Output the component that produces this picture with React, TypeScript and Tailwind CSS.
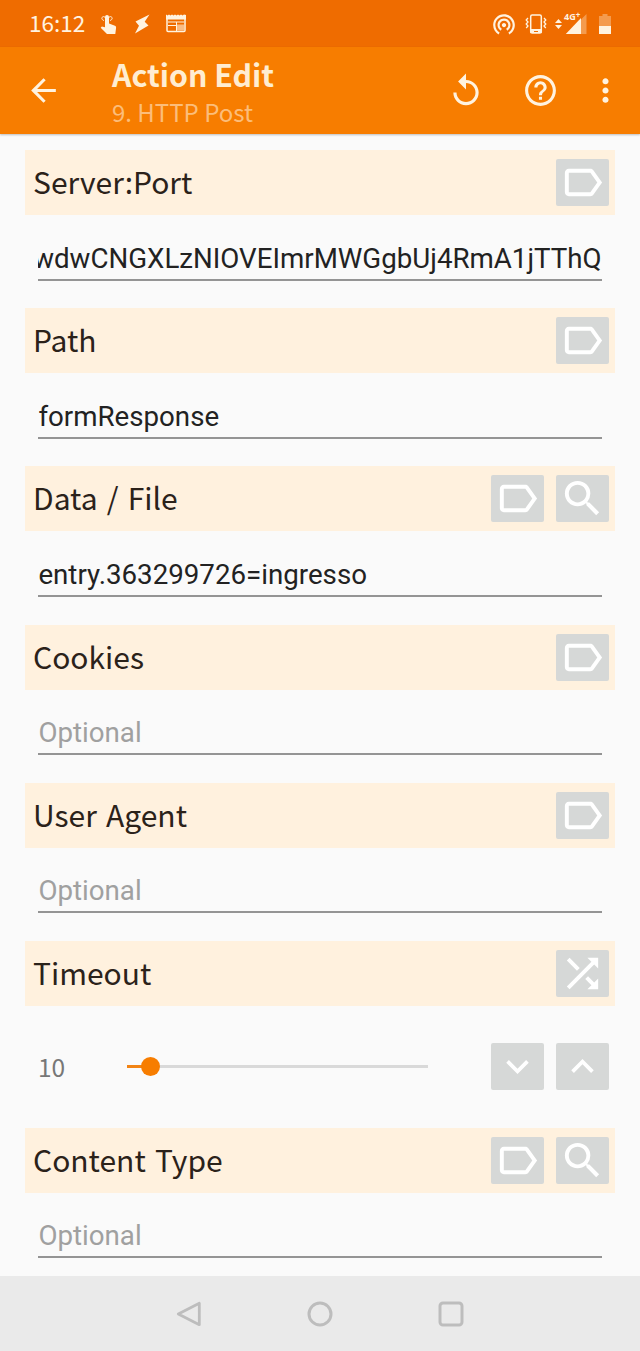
import type { ReactNode } from 'react'
import {
  MdArrowBack,
  MdHelpOutline,
  MdKeyboardArrowDown,
  MdKeyboardArrowUp,
  MdMoreVert,
  MdReplay,
  MdSearch,
  MdShuffle,
  MdWifiTethering,
} from 'react-icons/md'

type IconName = 'label' | 'search' | 'shuffle' | 'down' | 'up'

interface Field {
  title: string
  value?: string
  alignEnd?: boolean
  actions: IconName[]
}

const fields: Field[] = [
  { title: 'Server:Port', value: 'wdwCNGXLzNIOVEImrMWGgbUj4RmA1jTThQ', alignEnd: true, actions: ['label'] },
  { title: 'Path', value: 'formResponse', actions: ['label'] },
  { title: 'Data / File', value: 'entry.363299726=ingresso', actions: ['label', 'search'] },
  { title: 'Cookies', actions: ['label'] },
  { title: 'User Agent', actions: ['label'] },
]

const timeout = { value: 10, percent: 7.6 }

function LabelIcon() {
  return (
    <svg viewBox="0 0 24 24" className="size-[47px]" fill="currentColor">
      <path d="M17.63 5.84C17.27 5.33 16.67 5 16 5L5 5.01C3.9 5.01 3 5.9 3 7v10c0 1.1.9 1.99 2 1.99L16 19c.67 0 1.27-.33 1.63-.84L22 12l-4.37-6.16zM16 17H5V7h11l3.55 5L16 17z" />
    </svg>
  )
}

const icons: Record<IconName, ReactNode> = {
  label: <LabelIcon />,
  search: <MdSearch className="size-[47px]" />,
  shuffle: <MdShuffle className="size-[47px]" />,
  down: <MdKeyboardArrowDown className="size-[45px]" />,
  up: <MdKeyboardArrowUp className="size-[45px]" />,
}

function IconButton({ name }: { name: IconName }) {
  return (
    <button
      aria-label={name}
      className="flex h-[47px] w-[53px] shrink-0 items-center justify-center rounded-[2px] bg-[#d6d8d7] text-white"
    >
      {icons[name]}
    </button>
  )
}

function SectionHeader({ title, actions }: { title: string; actions: IconName[] }) {
  return (
    <div className="flex h-[65px] items-center justify-between bg-[#fff1de] pr-[6px] pl-2">
      <h2 className="pb-[3px] font-['Noto_Sans_CJK_SC',sans-serif] text-[30px] leading-none [word-spacing:2.5px] text-[#2b221a]">
        {title}
      </h2>
      <div className="flex gap-3">
        {actions.map((name) => (
          <IconButton key={name} name={name} />
        ))}
      </div>
    </div>
  )
}

function FieldSection({ title, value, alignEnd, actions }: Field) {
  return (
    <section className="h-[158.2px]">
      <SectionHeader title={title} actions={actions} />
      <div
        className={`mx-[13.4px] flex h-[65.5px] items-end overflow-hidden border-b-2 border-[#949494] pb-[4px] text-[27.7px] leading-[33px] whitespace-nowrap ${
          alignEnd ? 'justify-end' : ''
        } ${value ? 'text-[#222]' : 'text-[#a0a0a0]'}`}
      >
        <span>{value ?? 'Optional'}</span>
      </div>
    </section>
  )
}

function StatusBar() {
  return (
    <div className="flex h-[47px] shrink-0 items-center justify-between bg-[#ef6c00] pr-[29px] pl-[29px] text-[#fff3e0]">
      <div className="flex items-center">
        <span className="w-[71px] pb-[3px] font-['Noto_Sans_CJK_SC',sans-serif] text-[22.5px] leading-none">16:12</span>
        <svg viewBox="0 0 17 20" className="h-5 w-[17px]" fill="currentColor">
          <path d="M5 3a2 2 0 0 1 4 0v6.500l6 2.300q1.300.6 1.100 2L15.300 20H7L.7 13.800l1.200-1.300 3.100.8z" />
          <path d="M4 6.500C1.500 6 1 3 3.500 2.600L7 4l3.500-1.400C13 3 12.500 6 10 6.500" fill="none" stroke="currentColor" />
        </svg>
        <svg viewBox="0 0 16 20" className="ml-[17px] h-5 w-4" fill="currentColor">
          <path d="M15.500.5 1.500 7.500l3.500 4.200L1 19.500l13.500-8-3.800-3.800z" />
        </svg>
        <svg viewBox="0 0 20 19" className="ml-[16px] h-[19px] w-5" fill="none" stroke="currentColor">
          <path d="M1 3v13.500q0 1 1 1h16q1 0 1-1V3" strokeWidth="1.500" />
          <path d="M0 .5l1.500 1L3 .5l1.500 1L6 .5l1.500 1L9 .5l1.500 1 1.500-1 1.500 1 1.500-1 1.500 1 1.500-1L20 1v4.500H0z" fill="currentColor" stroke="none" />
          <path d="M2 8h16M2 11.500h8M10.500 8v9" />
          <path d="M11 10.500h7v6h-7z" fill="currentColor" stroke="none" opacity=".6" />
        </svg>
      </div>
      <div className="flex items-center">
        <MdWifiTethering className="size-[26px]" />
        <svg viewBox="0 0 22 20" className="ml-2 h-5 w-[22px]" fill="none" stroke="currentColor">
          <rect x="5.700" y="1" width="10.600" height="18" rx="1.500" strokeWidth="1.500" />
          <path d="M5.500 15.500h11v3h-11z" fill="currentColor" />
          <path d="M9 17.500h4" stroke="#ef6c00" />
          <path d="M3 4 1.200 6 3 8 1.200 10 3 12 1.200 14M19 4l1.800 2L19 8l1.800 2-1.800 2 1.800 2" strokeWidth="1.300" />
        </svg>
        <svg viewBox="0 0 7 10" className="ml-2 h-2.5 w-[7px]" fill="currentColor">
          <path d="M3.500 0 7 4H0zM3.500 10 0 6h7z" />
        </svg>
        <div className="relative ml-[3px] h-5 w-[22px]">
          <svg viewBox="0 0 22 20" className="h-5 w-[22px]" fill="currentColor">
            <path d="M16 4v16H.8z" />
            <path d="M16 5.500 21.500 0v20H16z" opacity=".35" />
          </svg>
          <span className="absolute top-[-2px] left-[-1px] font-['Open_Sans',sans-serif] text-[9px] leading-[10px] font-bold">
            4G
            <span className="relative top-[-2px] text-[8px]">+</span>
          </span>
        </div>
        <svg viewBox="0 0 12 20" className="ml-3 h-5 w-3" fill="currentColor">
          <path d="M3.500 0h5v2H12v10H0V2h3.500z" opacity=".35" />
          <path d="M0 12h12v8H0z" />
        </svg>
      </div>
    </div>
  )
}

function NavBar() {
  return (
    <nav className="flex h-[75px] shrink-0 items-center justify-center gap-[103px] bg-[#eaeaea] text-[#bdbdbd]">
      <svg viewBox="0 0 28 28" className="size-7" fill="none" stroke="currentColor" strokeWidth="2.8" strokeLinejoin="round">
        <path d="M24.300 3.300v21.400L3.300 14z" />
      </svg>
      <svg viewBox="0 0 28 28" className="size-7" fill="none" stroke="currentColor" strokeWidth="3">
        <circle cx="14" cy="14" r="11" />
      </svg>
      <svg viewBox="0 0 28 28" className="size-7" fill="none" stroke="currentColor" strokeWidth="3">
        <rect x="3" y="3" width="22" height="22" rx="3" />
      </svg>
    </nav>
  )
}

export default function App() {
  return (
    <div className="flex h-[1351px] w-[640px] flex-col overflow-hidden bg-[#fafafa] font-[Roboto,sans-serif]">
      <StatusBar />
      <header className="flex h-[87px] shrink-0 items-center bg-[#f77d00] text-[#fff3e0] shadow-[0_1px_2px_rgba(0,0,0,0.25)]">
        <MdArrowBack className="ml-[25px] size-[37px]" />
        <div className="ml-[50px] flex-1 pt-[3px] font-['Noto_Sans_CJK_SC',sans-serif]">
          <h1 className="text-[30.3px] leading-[38px] font-bold text-[#ffedd1]">Action Edit</h1>
          <p className="text-[24px] leading-[37px] text-[#fcbd7a]">9. HTTP Post</p>
        </div>
        <MdReplay className="size-[38px]" />
        <MdHelpOutline className="ml-[37px] size-[37px]" />
        <MdMoreVert className="mr-4 ml-7 size-[37px]" />
      </header>
      <main className="flex-1 overflow-hidden px-[25px] pt-[16px]">
        {fields.map((field) => (
          <FieldSection key={field.title} {...field} />
        ))}
        <section className="h-[187px]">
          <SectionHeader title="Timeout" actions={['shuffle']} />
          <div className="flex h-[122px] items-center pr-[6px] pl-[13px]">
            <span className="w-[89px] font-['Noto_Sans_CJK_SC',sans-serif] text-[24.5px] leading-none text-[#777]">
              {timeout.value}
            </span>
            <div className="flex h-[3px] w-[301px] items-center bg-[#d9d9d9]">
              <div className="h-[3px] bg-[#f28415]" style={{ width: `${timeout.percent}%` }} />
              <div className="-ml-[9px] size-[19px] shrink-0 rounded-full bg-[#f77d00]" />
            </div>
            <div className="ml-auto flex gap-3">
              <IconButton name="down" />
              <IconButton name="up" />
            </div>
          </div>
        </section>
        <FieldSection title="Content Type" actions={['label', 'search']} />
      </main>
      <NavBar />
    </div>
  )
}
